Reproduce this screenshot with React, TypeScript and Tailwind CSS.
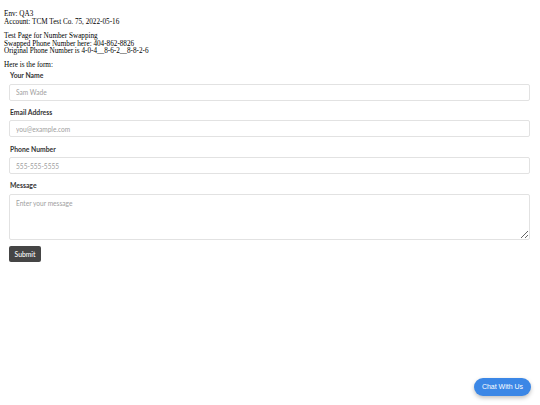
export default function App() {
  const lato = "font-['Lato','Noto_Sans',sans-serif]"
  const field =
    "block mt-[4.5px] w-full h-[17px] px-[6px] rounded-[2px] border border-[#e2e2e2] bg-white text-[6.6px] text-[#333] placeholder:text-[#a0a0a0] outline-none"
  return (
    <div className="relative w-full min-h-screen bg-white">
      {/* Page header text */}
      <div className="px-[4px] pt-[11.35px] text-[7.2px] leading-[7.3px] text-black font-['Liberation_Serif',serif]">
        <div>Env: QA3</div>
        <div>Account: TCM Test Co. 75, 2022-05-16</div>
        <div className="h-[7.3px]"></div>
        <div>Test Page for Number Swapping</div>
        <div>Swapped Phone Number here: 404-862-8826</div>
        <div>Original Phone Number is 4-0-4__8-6-2__8-8-2-6</div>
        <div className="h-[7.3px]"></div>
        <div>Here is the form:</div>
      </div>

      {/* Form */}
      <form className={`pl-[9px] pr-[10px] mt-[2.3px] flex flex-col ${lato}`}>
        <label className="block">
          <span className="block pl-[1px] text-[6.8px] leading-[7px] font-bold text-[#333]">Your Name</span>
          <input placeholder="Sam Wade" className={field} />
        </label>
        <label className="block mt-[8.3px]">
          <span className="block pl-[1px] text-[6.8px] leading-[7px] font-bold text-[#333]">Email Address</span>
          <input placeholder="you@example.com" className={field} />
        </label>
        <label className="block mt-[8.3px]">
          <span className="block pl-[1px] text-[6.8px] leading-[7px] font-bold text-[#333]">Phone Number</span>
          <input placeholder="555-555-5555" className={field} />
        </label>
        <label className="block mt-[8px]">
          <span className="block pl-[1px] text-[6.8px] leading-[7px] font-bold text-[#333]">Message</span>
          <textarea
            placeholder="Enter your message"
            className="block mt-[4.5px] w-full h-[46px] px-[6px] py-[4px] rounded-[2px] border border-[#e2e2e2] bg-white text-[6.6px] leading-[8px] text-[#333] placeholder:text-[#a0a0a0] outline-none"
          />
        </label>
        <div className="mt-[6.5px] flex">
          <button
            type="button"
            className="h-[16px] w-[32px] rounded-[2px] bg-[#454545] text-white text-[6.8px] font-medium"
          >
            Submit
          </button>
        </div>
      </form>

      {/* Floating chat button */}
      <button
        type="button"
        className="absolute right-[9px] bottom-[9px] h-[18px] w-[57px] rounded-full bg-[#3b87e6] text-white text-[7px] font-['Liberation_Sans',sans-serif] shadow-[0_2px_4px_rgba(0,0,0,0.25)]"
      >
        Chat With Us
      </button>
    </div>
  )
}
